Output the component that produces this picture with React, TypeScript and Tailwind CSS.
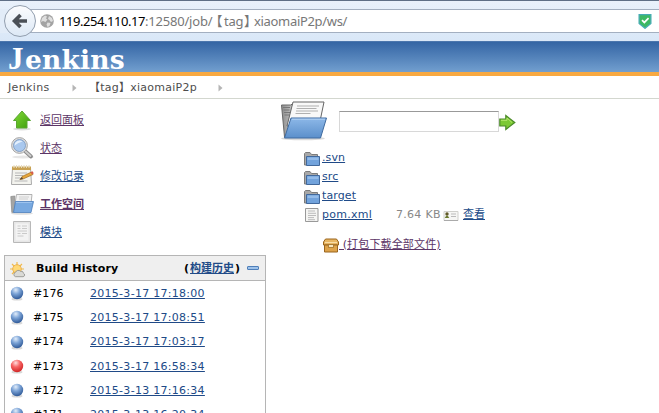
import type { ReactNode } from "react";

const VERDANA = "font-['DejaVu_Sans','Noto_Sans_CJK_SC',sans-serif]";

function FolderLarge({ className }: { className: string }) {
  return (
    <svg viewBox="0 0 48 40" className={className}>
      <defs>
        <linearGradient id="folderFront" x1="0" y1="0" x2="0" y2="1">
          <stop offset="0" stopColor="#8db8e8" />
          <stop offset="1" stopColor="#5b8fcb" />
        </linearGradient>
        <linearGradient id="folderBack" x1="0" y1="0" x2="1" y2="0">
          <stop offset="0" stopColor="#8c8c8c" />
          <stop offset="1" stopColor="#c4c4c4" />
        </linearGradient>
      </defs>
      <ellipse cx="23" cy="38" rx="22" ry="1.8" fill="#d9d9d9" />
      <path d="M1.500 4.500h9l2-1v33h-8z" fill="url(#folderBack)" stroke="#686868" />
      <path d="M3 7h7M3.500 9.500h6M4 12h6M4.500 14.500h5" stroke="#777" strokeWidth="1" />
      <path d="M13 1.500h31l-5 24H7z" fill="#f8f8f8" stroke="#666" />
      <path d="M17 5.500h22M16.500 8h20M16 10.500h22M15.500 13h15" stroke="#b0b0b0" />
      <path d="M11 17.500h35.500l-6 20H4.500z" fill="url(#folderFront)" stroke="#3f6ba0" />
      <path d="M12 18.700h33" stroke="#b4d3f4" />
    </svg>
  );
}

function FolderTask() {
  return (
    <svg viewBox="0 0 24 22" className="h-[22px] w-6">
      <ellipse cx="12" cy="20.500" rx="11" ry="1.300" fill="#dedede" />
      <path d="M.8 3.500l4-.5v16l-3 .5z" fill="#a5a5a3" stroke="#8a8a8a" strokeWidth=".7" />
      <path d="M6.500 1.500h15.500l-1 9H5z" fill="#f2f2f2" stroke="#a0a0a0" strokeWidth=".8" />
      <path d="M9 4h10M9 6h9" stroke="#c8c8c8" strokeWidth=".8" />
      <path d="M5.500 8.500h18l-2.500 11H3.500z" fill="#78a9e0" stroke="#4c7fbd" strokeWidth=".8" />
      <path d="M6 9.500h16" stroke="#a8cbf2" strokeWidth=".8" />
    </svg>
  );
}

function FolderSmall() {
  return (
    <svg viewBox="0 0 16 16" className="h-4 w-4 shrink-0">
      <path d="M.5 14V2.500l1-1h4.500l1.500 2h6V14z" fill="#a8a8a8" stroke="#7c7c7c" />
      <path d="M2.500 5.500h13v9h-13z" fill="#72a3dc" stroke="#42699c" />
      <path d="M3.500 6.500h11v2.500h-11z" fill="#93bbe9" />
    </svg>
  );
}

function DocSmall() {
  return (
    <svg viewBox="0 0 16 16" className="-mt-[2px] h-4 w-4 shrink-0">
      <path d="M1.500 1.500h12.500v13h-12.500z" fill="#f5f5f3" stroke="#999" />
      <path d="M4 4h7M4 6.300h8M4 8.500h8M4 10.600h6M4 12.700h7" stroke="#b5b5b5" strokeWidth=".9" />
    </svg>
  );
}

function UpArrow() {
  return (
    <svg viewBox="0 0 24 24" className="h-6 w-6">
      <defs>
        <linearGradient id="upGreen" x1="0" y1="0" x2="1" y2="1">
          <stop offset="0" stopColor="#84dc38" />
          <stop offset="1" stopColor="#3c9c0c" />
        </linearGradient>
      </defs>
      <ellipse cx="12" cy="21" rx="9" ry="1.500" fill="#dedede" />
      <path d="M12 3l8.500 9.500H17V20H6.500v-7.500H3.500z" fill="url(#upGreen)" stroke="#5aa632" />
    </svg>
  );
}

function Magnifier() {
  return (
    <svg viewBox="0 0 24 24" className="h-6 w-6">
      <ellipse cx="13" cy="21" rx="11" ry="1.500" fill="#e6e6e6" />
      <path d="M15.500 15.500l5.500 5" stroke="#8a8a8a" strokeWidth="3.800" strokeLinecap="round" />
      <path d="M15 15l5.500 5" stroke="#cdcdcd" strokeWidth="1.800" strokeLinecap="round" />
      <circle cx="9.500" cy="9.500" r="7.900" fill="#dedede" stroke="#a0a0a0" strokeWidth=".9" />
      <circle cx="9.500" cy="9.500" r="6" fill="#a9c8ee" stroke="#7796bd" strokeWidth=".8" />
      <path d="M4.500 9.500a5 5 0 0 1 8-4Q8.500 6.500 4.500 9.500z" fill="#e3effc" />
    </svg>
  );
}

function Notepad() {
  return (
    <svg viewBox="0 0 24 24" className="h-6 w-6">
      <path d="M2.500 4h18l1 16.500H1.500z" fill="#f3f3ee" stroke="#aaa" />
      <path d="M2 2.500h19V6H2z" fill="#c9a253" />
      <path d="M4 1v3M6.500 1v3M9 1v3M11.500 1v3M14 1v3M16.500 1v3M19 1v3" stroke="#e6dcc4" strokeWidth="1" />
      <path d="M5 9h12M5 11.500h8M5 14h5M4.500 17h13" stroke="#b7b7b7" />
      <path d="M12 12.500l9.500-4.500 1.500 2.500-10 4.500-3 .5z" fill="#e6a63a" stroke="#a06b21" strokeWidth=".7" />
      <path d="M20.500 8.300l2-1 1.300 2-1.800 1.200z" fill="#d55a4e" />
      <path d="M9.500 15.500l2.500-2.500 1 2z" fill="#554637" />
    </svg>
  );
}

function ModuleDoc() {
  return (
    <svg viewBox="0 0 24 24" className="h-6 w-6">
      <path d="M3.500 1.500h17v21h-17z" fill="#e6e6e6" stroke="#b8b8b8" />
      <path d="M5.500 3.500h13v17h-13z" fill="#f3f3f3" />
      <path d="M7.500 6h3M7.500 8.500h3M12 6h5M12 8.500h5M7.500 11h9.500M7.500 13.500h3M12 13.500h5M7.500 16h6" stroke="#cacaca" />
    </svg>
  );
}

function Weather() {
  return (
    <svg viewBox="0 0 16 16" className="mt-[3px] h-4 w-4">
      <path d="M7 0v14M0 7h14M2 2l10 10M12 2L2 12" stroke="#f1bb4d" strokeWidth="1.200" />
      <circle cx="7" cy="7" r="4.300" fill="#ffd978" stroke="#e8a63a" strokeWidth=".8" />
      <path d="M5.500 14.700a2.300 2.300 0 0 1 0-4.400 3 3 0 0 1 5-1 2.400 2.400 0 0 1 3 2 1.800 1.800 0 0 1-.3 3.400z" fill="#dadad6" stroke="#8c8c88" strokeWidth=".8" />
    </svg>
  );
}

function Ball({ red }: { red?: boolean }) {
  return (
    <svg viewBox="0 0 14 15" className="mt-px h-[15px] w-[14px]">
      <defs>
        <radialGradient id="ballBlue" cx=".4" cy=".25" r=".75">
          <stop offset="0" stopColor="#e2edfa" />
          <stop offset=".45" stopColor="#7ba3d6" />
          <stop offset="1" stopColor="#305a98" />
        </radialGradient>
        <radialGradient id="ballRed" cx=".4" cy=".25" r=".75">
          <stop offset="0" stopColor="#ffdede" />
          <stop offset=".45" stopColor="#f76464" />
          <stop offset="1" stopColor="#d02626" />
        </radialGradient>
      </defs>
      <ellipse cx="7" cy="13" rx="5.500" ry="1.600" fill="#d8d8d8" />
      <circle cx="7" cy="7" r="6.200" fill={red ? "url(#ballRed)" : "url(#ballBlue)"} />
    </svg>
  );
}

function Crumb() {
  return (
    <svg viewBox="0 0 5 8" className="mt-px h-2 w-[5px] shrink-0">
      <path d="M.5.500L4.500 4 .5 7.500z" fill="#b5b5b5" />
    </svg>
  );
}

const tasks: { icon: ReactNode; label: string; style: string }[] = [
  { icon: <UpArrow />, label: "返回面板", style: "text-[#5c3566]" },
  { icon: <Magnifier />, label: "状态", style: "text-[#5c3566]" },
  { icon: <Notepad />, label: "修改记录", style: "text-[#204a87]" },
  { icon: <FolderTask />, label: "工作空间", style: "font-bold text-[#5c3566]" },
  { icon: <ModuleDoc />, label: "模块", style: "text-[#204a87]" },
];

const builds = [
  { id: "#176", time: "2015-3-17 17:18:00" },
  { id: "#175", time: "2015-3-17 17:08:51" },
  { id: "#174", time: "2015-3-17 17:03:17" },
  { id: "#173", time: "2015-3-17 16:58:34", red: true },
  { id: "#172", time: "2015-3-13 17:16:34" },
  { id: "#171", time: "2015-3-13 16:20:34" },
];

function BrowserBar() {
  return (
    <div className="flex h-[41px] flex-col border-t border-[#5f6f86] bg-linear-to-b from-[#e9f1fb] to-[#d9e7f7] pt-2">
      <div className="flex h-6 items-center border-y border-[#a3afc0] bg-white">
        <svg viewBox="0 0 34 34" className="ml-[3px] h-[34px] w-[34px] shrink-0 overflow-visible">
          <defs>
            <linearGradient id="back" x1="0" y1="0" x2="0" y2="1">
              <stop offset="0" stopColor="#fbfcfe" />
              <stop offset="1" stopColor="#dce8f5" />
            </linearGradient>
          </defs>
          <path d="M-3 5h20v24h-20z" fill="#e2ecf8" />
          <circle cx="17" cy="17" r="15.500" fill="url(#back)" stroke="#929eae" />
          <path d="M12 17h12M17.500 11L11.500 17l6 6" fill="none" stroke="#4b5057" strokeWidth="3.600" />
        </svg>
        <svg viewBox="0 0 14 14" className="ml-[3px] h-[14px] w-[14px] shrink-0">
          <circle cx="7" cy="7" r="6.800" fill="#a3a3a3" />
          <path d="M2 4l3-2.500 2 1-1 2 1.500 1-2 2.500L3 7 1 8zM9 2l3 2 1 3-2 1-1.500-2L8 5zM7.500 8.500l3 .5-1 3-2 1-1-2.500z" fill="#dedede" />
        </svg>
        <div className="flex h-[22px] items-center whitespace-pre font-['Noto_Sans','Noto_Sans_CJK_SC',sans-serif] text-[13px] leading-[22px] text-[#777]">
          <span className="ml-[5px] w-[86px] tracking-[-0.45px] text-black">119.254.110.17</span>
          <span className="w-[71px] tracking-[-0.2px]">:12580/job/</span>
          <span className="w-2 [font-feature-settings:'halt']">【</span>
          <span className="w-5 tracking-[-0.3px]">tag</span>
          <span className="w-[10px] [font-feature-settings:'halt']">】</span>
          <span className="tracking-[-0.32px]">xiaomaiP2p/ws/</span>
        </div>
        <svg viewBox="0 0 14 16" className="mr-[7px] ml-auto h-[15px] w-[14px] shrink-0">
          <path d="M.7.700h12.600v9.500L7 15.300.7 10.200z" fill="#3db863" stroke="#46acb4" strokeWidth="1.300" />
          <path d="M3.800 6.500l2.500 2.500 4.500-4.500" fill="none" stroke="#fff" strokeWidth="1.800" />
        </svg>
      </div>
    </div>
  );
}

function Sidebar() {
  return (
    <aside className="w-[270px] shrink-0 pt-[7px]">
      {tasks.map((t) => (
        <div key={t.label} className="flex h-7 items-center pl-[10px]">
          <span className="flex w-[30px]">{t.icon}</span>
          <a className={"pt-px text-[11px] leading-[13px] underline " + t.style}>{t.label}</a>
        </div>
      ))}
      <section className="mt-[9px] ml-1 h-[180px] w-[262px] border border-[#b5b5b5] text-[11px]">
        <header className="flex h-[25px] items-center border-b border-[#b5b5b5] bg-[#efefef] pl-[5px] font-bold text-black">
          <Weather />
          <h2 className="ml-[10px] w-[148px] pt-[2px] tracking-[0.15px] whitespace-nowrap">Build History</h2>
          <span className="flex pt-[2px] whitespace-nowrap">
            (<a className="mx-px text-[#204a87] underline">构建历史</a>)
          </span>
          <span className="mr-[6px] ml-auto h-1 w-3 rounded-[1px] border border-[#4f7fb9] bg-[#9ec2ea]" />
        </header>
        {builds.map((b) => (
          <div key={b.id} className="flex h-[24.25px] items-center pl-[5px]">
            <Ball red={b.red} />
            <span className="ml-[9px] w-[57px] pt-[2px] tracking-[0.1px] text-black">{b.id}</span>
            <a className="pt-[2px] tracking-[0.28px] whitespace-nowrap text-[#204a87] underline">{b.time}</a>
          </div>
        ))}
      </section>
    </aside>
  );
}

function Workspace() {
  return (
    <main className="flex-1">
      <div className="flex h-[48px] items-start pl-[10px]">
        <FolderLarge className="mt-[1px] h-[41px] w-12" />
        <input className="mt-3 ml-[11px] h-[21px] w-[160px] border border-[#d8d8d8] border-t-[#999] bg-white" />
        <svg viewBox="0 0 17 17" className="mt-[15px] h-[17px] w-[17px]">
          <path d="M.8 5h6V1.500l9 7-9 7V12h-6z" fill="#7cc934" stroke="#4b8a2a" strokeWidth="1.200" />
          <path d="M2 6.300h6V4l5 4.500" fill="none" stroke="#b6e66e" />
        </svg>
      </div>
      <div className="pt-[2px] pl-[34px] text-[11px] text-[#204a87]">
        {[".svn", "src", "target"].map((name) => (
          <div key={name} className="flex h-[19px] items-center">
            <FolderSmall />
            <a className="ml-[2px] tracking-[0.1px] underline">{name}</a>
          </div>
        ))}
        <div className="flex h-[19px] items-center">
          <DocSmall />
          <a className="ml-[2px] w-[74px] tracking-[0.28px] underline">pom.xml</a>
          <span className="w-[47px] tracking-[0.28px] whitespace-nowrap text-[#888]">7.64 KB</span>
          <svg viewBox="0 0 16 12" className="h-3 w-4">
            <path d="M1 1.500h14v9H1z" fill="#f6f6f4" stroke="#d0d0cc" />
            <path d="M1 10.500h14" stroke="#aaa" />
            <circle cx="4" cy="4" r="1.700" fill="#615a28" />
            <path d="M1.700 8q2.300-5 4.600 0z" fill="#6b7a2d" />
            <path d="M8 4h5M8 6.500h5" stroke="#bbb" />
          </svg>
          <a className="ml-1 underline">查看</a>
        </div>
        <div className="mt-[10px] flex h-5 items-center pl-[19px] text-[#5c3566]">
          <svg viewBox="0 0 16 15" className="h-[15px] w-4 shrink-0">
            <path d="M2.500 1h11l2 3v3H.5V4z" fill="#e8b663" stroke="#9a651d" />
            <path d="M1.500 7h13v7h-13z" fill="#dda34b" stroke="#9a651d" />
            <path d="M2 4.500h12" stroke="#f7dda8" />
            <path d="M5.500 6.500h5v3h-5z" fill="#f7e6bd" stroke="#9a651d" strokeWidth=".7" />
          </svg>
          <a className="tracking-[0.15px] whitespace-pre underline"> (打包下载全部文件)</a>
        </div>
      </div>
    </main>
  );
}

export default function App() {
  return (
    <div className={"h-[413px] w-[659px] overflow-hidden bg-white " + VERDANA}>
      <BrowserBar />
      <header className="flex h-[35px] items-center border-t border-b-4 border-t-[#4b76ad] border-b-[#f8a941] bg-linear-to-b from-[#3465a4] to-[#729fcf] pl-2">
        <h1 className="flex items-baseline pt-[3px] font-['DejaVu_Serif',serif] text-[26.5px] leading-[27px] font-bold tracking-[0.2px] text-white">
          <span className="w-[17px] font-['Liberation_Serif',serif] text-[31px]">J</span>
          <span>enkins</span>
        </h1>
      </header>
      <nav className="flex h-[23px] items-center border-b border-[#d3d7cf] pl-2 text-[11px] text-[#4d4d4d]">
        <span className="w-16 pt-[2px] tracking-[0.35px]">Jenkins</span>
        <Crumb />
        <span className="ml-3 w-[129px] pt-[2px] tracking-[0.25px] whitespace-nowrap">【tag】xiaomaiP2p</span>
        <Crumb />
      </nav>
      <div className="flex">
        <Sidebar />
        <Workspace />
      </div>
    </div>
  );
}
